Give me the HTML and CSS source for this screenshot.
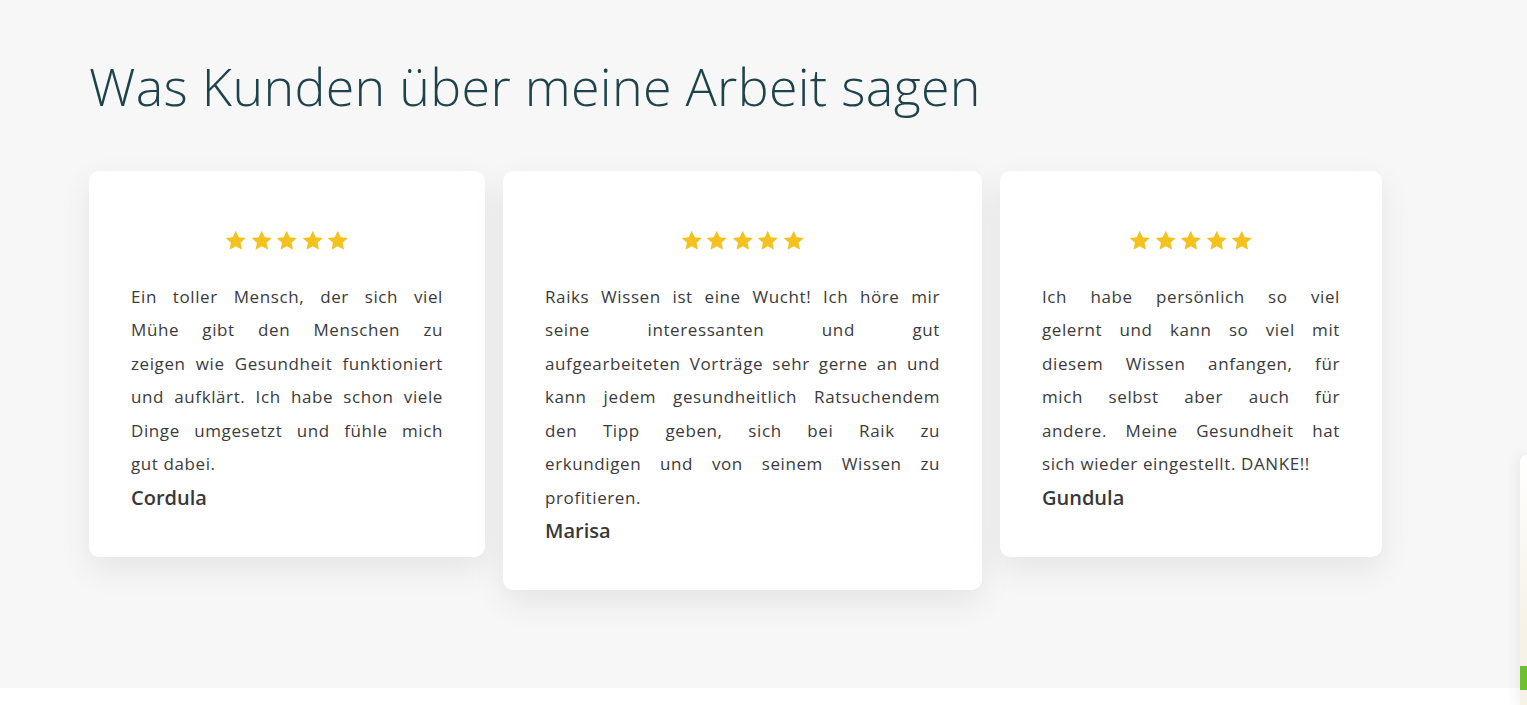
FILE: index.html
```html
<!DOCTYPE html>
<html lang="de">

<head>
	<title>Kundenstimmen</title>
	<meta charset="utf-8"/>
	<meta name="viewport" content="width=device-width, initial-scale=1"/>

	<link rel="stylesheet" href="styles.css">
</head>

<body>
	<section class="testimonials">
		<h2 class="section-title">Was Kunden über meine Arbeit sagen</h2>

		<div class="review-row">
			<div class="review review-narrow">
				<div class="stars">
					<svg viewBox="0 0 24 24"><path d="M12 1.8l3.1 6.6 7.2.8-5.4 4.9 1.5 7.1L12 17.6l-6.4 3.6 1.5-7.1L1.7 9.2l7.2-.8z"/></svg>
					<svg viewBox="0 0 24 24"><path d="M12 1.8l3.1 6.6 7.2.8-5.4 4.9 1.5 7.1L12 17.6l-6.4 3.6 1.5-7.1L1.7 9.2l7.2-.8z"/></svg>
					<svg viewBox="0 0 24 24"><path d="M12 1.8l3.1 6.6 7.2.8-5.4 4.9 1.5 7.1L12 17.6l-6.4 3.6 1.5-7.1L1.7 9.2l7.2-.8z"/></svg>
					<svg viewBox="0 0 24 24"><path d="M12 1.8l3.1 6.6 7.2.8-5.4 4.9 1.5 7.1L12 17.6l-6.4 3.6 1.5-7.1L1.7 9.2l7.2-.8z"/></svg>
					<svg viewBox="0 0 24 24"><path d="M12 1.8l3.1 6.6 7.2.8-5.4 4.9 1.5 7.1L12 17.6l-6.4 3.6 1.5-7.1L1.7 9.2l7.2-.8z"/></svg>
				</div>
				<p class="quote">
					<span class="line">Ein toller Mensch, der sich viel</span>
					<span class="line">Mühe gibt den Menschen zu</span>
					<span class="line">zeigen wie Gesundheit funktioniert</span>
					<span class="line">und aufklärt. Ich habe schon viele</span>
					<span class="line">Dinge umgesetzt und fühle mich</span>
					<span class="line">gut dabei.</span>
				</p>
				<div class="author">Cordula</div>
			</div>

			<div class="review review-wide">
				<div class="stars">
					<svg viewBox="0 0 24 24"><path d="M12 1.8l3.1 6.6 7.2.8-5.4 4.9 1.5 7.1L12 17.6l-6.4 3.6 1.5-7.1L1.7 9.2l7.2-.8z"/></svg>
					<svg viewBox="0 0 24 24"><path d="M12 1.8l3.1 6.6 7.2.8-5.4 4.9 1.5 7.1L12 17.6l-6.4 3.6 1.5-7.1L1.7 9.2l7.2-.8z"/></svg>
					<svg viewBox="0 0 24 24"><path d="M12 1.8l3.1 6.6 7.2.8-5.4 4.9 1.5 7.1L12 17.6l-6.4 3.6 1.5-7.1L1.7 9.2l7.2-.8z"/></svg>
					<svg viewBox="0 0 24 24"><path d="M12 1.8l3.1 6.6 7.2.8-5.4 4.9 1.5 7.1L12 17.6l-6.4 3.6 1.5-7.1L1.7 9.2l7.2-.8z"/></svg>
					<svg viewBox="0 0 24 24"><path d="M12 1.8l3.1 6.6 7.2.8-5.4 4.9 1.5 7.1L12 17.6l-6.4 3.6 1.5-7.1L1.7 9.2l7.2-.8z"/></svg>
				</div>
				<p class="quote">
					<span class="line">Raiks Wissen ist eine Wucht! Ich höre mir</span>
					<span class="line">seine interessanten und gut</span>
					<span class="line">aufgearbeiteten Vorträge sehr gerne an und</span>
					<span class="line">kann jedem gesundheitlich Ratsuchendem</span>
					<span class="line">den Tipp geben, sich bei Raik zu</span>
					<span class="line">erkundigen und von seinem Wissen zu</span>
					<span class="line">profitieren.</span>
				</p>
				<div class="author">Marisa</div>
			</div>

			<div class="review review-small">
				<div class="stars">
					<svg viewBox="0 0 24 24"><path d="M12 1.8l3.1 6.6 7.2.8-5.4 4.9 1.5 7.1L12 17.6l-6.4 3.6 1.5-7.1L1.7 9.2l7.2-.8z"/></svg>
					<svg viewBox="0 0 24 24"><path d="M12 1.8l3.1 6.6 7.2.8-5.4 4.9 1.5 7.1L12 17.6l-6.4 3.6 1.5-7.1L1.7 9.2l7.2-.8z"/></svg>
					<svg viewBox="0 0 24 24"><path d="M12 1.8l3.1 6.6 7.2.8-5.4 4.9 1.5 7.1L12 17.6l-6.4 3.6 1.5-7.1L1.7 9.2l7.2-.8z"/></svg>
					<svg viewBox="0 0 24 24"><path d="M12 1.8l3.1 6.6 7.2.8-5.4 4.9 1.5 7.1L12 17.6l-6.4 3.6 1.5-7.1L1.7 9.2l7.2-.8z"/></svg>
					<svg viewBox="0 0 24 24"><path d="M12 1.8l3.1 6.6 7.2.8-5.4 4.9 1.5 7.1L12 17.6l-6.4 3.6 1.5-7.1L1.7 9.2l7.2-.8z"/></svg>
				</div>
				<p class="quote">
					<span class="line">Ich habe persönlich so viel</span>
					<span class="line">gelernt und kann so viel mit</span>
					<span class="line">diesem Wissen anfangen, für</span>
					<span class="line">mich selbst aber auch für</span>
					<span class="line">andere. Meine Gesundheit hat</span>
					<span class="line">sich wieder eingestellt. DANKE!!</span>
				</p>
				<div class="author">Gundula</div>
			</div>
		</div>
	</section>

	<footer class="page-end"></footer>

	<!-- side panel peeking in from the right edge -->
	<div class="side-panel">
		<div class="side-panel-bar"></div>
	</div>
</body>
</html>
```

FILE: styles.css
```css
body {
	margin: 0;
	background-color: #fff;
	font-family: "Open Sans", "Lato", sans-serif;
	color: #3b3b3b;
	overflow: hidden;
}

.testimonials {
	background-color: #f7f7f7;
	padding: 50px 89px 98px;
	height: 688px;
	box-sizing: border-box;
}

.section-title {
	margin: 0 0 49px;
	font-weight: 300;
	font-size: 52px;
	line-height: 72px;
	letter-spacing: 0.3px;
	color: #1f434b;
}

.review-row {
	display: flex;
	align-items: flex-start;
	gap: 18px;
}

.review {
	background: #fff;
	border-radius: 10px;
	padding: 58px 42px 43px;
	box-shadow: 0 12px 32px rgba(0, 0, 0, 0.08);
	box-sizing: border-box;
}

.review-narrow { width: 396px; }
.review-wide { width: 479px; }
.review-small { width: 382px; }

.stars {
	display: flex;
	justify-content: center;
	gap: 2px;
	margin-bottom: 27px;
}

.stars svg {
	width: 23.5px;
	height: 23.5px;
	fill: #f4c21f;
}

.quote {
	margin: 0;
	font-size: 17px;
	line-height: 33.5px;
	letter-spacing: 0.6px;
}

/* keep the wrapping fixed, every row but the last one spread edge to edge */
.quote .line {
	display: block;
	text-align: justify;
	text-align-last: justify;
}

.quote .line:last-child {
	text-align-last: left;
}

.author {
	font-size: 20px;
	line-height: 33px;
	font-weight: 600;
	color: #383838;
}

.page-end {
	height: 17px;
	background: #fff;
}

.side-panel {
	position: absolute;
	right: 0;
	top: 455px;
	bottom: 0;
	width: 7px;
	border-radius: 8px 0 0 0;
	background: linear-gradient(#fff, #f6f2e8 70%);
	box-shadow: 0 0 14px rgba(0, 0, 0, 0.12);
}

.side-panel-bar {
	margin-top: 211px;
	height: 24px;
	background: #6cc12e;
}
```
